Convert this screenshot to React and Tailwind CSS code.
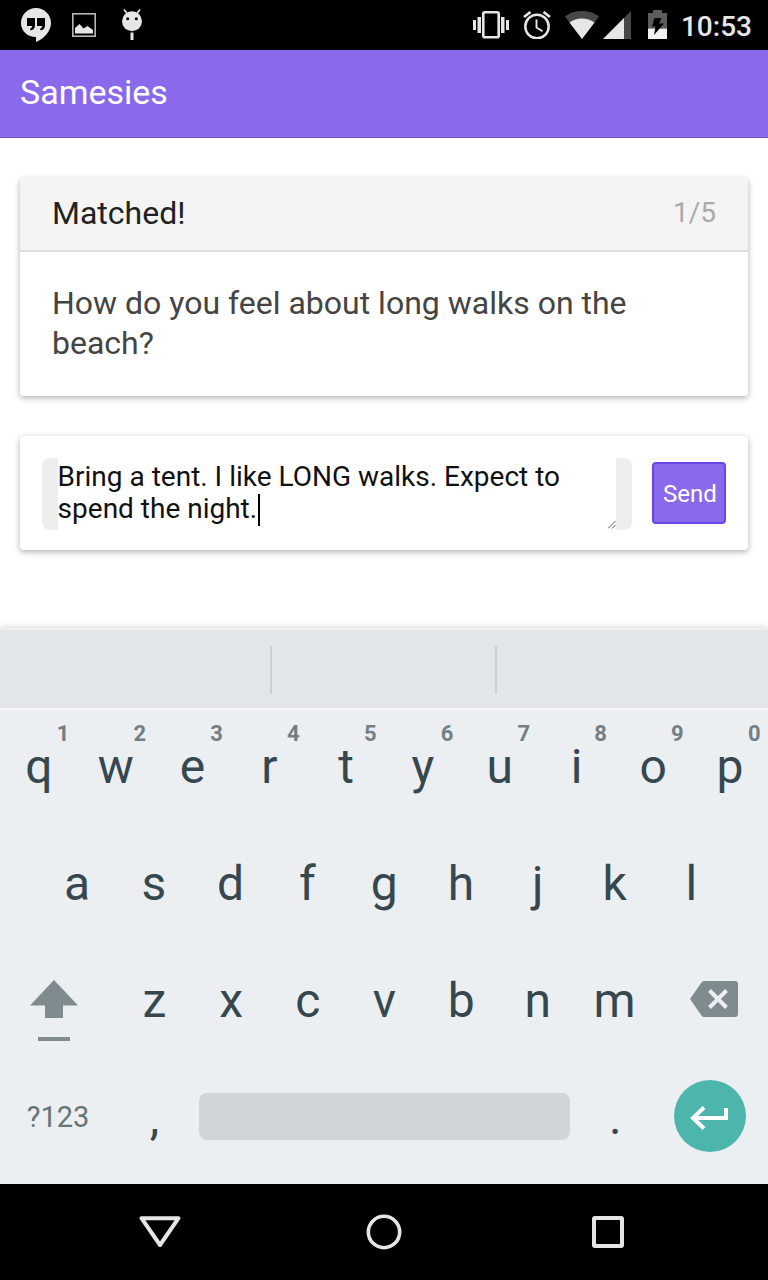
import React from "react";

const TOP_KEYS = [
  ["q", "1"], ["w", "2"], ["e", "3"], ["r", "4"], ["t", "5"],
  ["y", "6"], ["u", "7"], ["i", "8"], ["o", "9"], ["p", "0"],
];
const HOME_KEYS = ["a", "s", "d", "f", "g", "h", "j", "k", "l"];
const BOTTOM_KEYS = ["z", "x", "c", "v", "b", "n", "m"];

function HangoutsIcon() {
  return (
    <svg className="h-[34px] w-[30px]" viewBox="0 0 30 34">
      <path fill="#e6e6e6" d="M15 0C6.700 0 0 6.700 0 15c0 8 6.500 14 15 14v5c8.500-3.500 15-11 15-19C30 6.700 23.300 0 15 0Z" />
      <path fill="#000" d="M6 10h8v7.500c0 3-1.800 4.700-4.800 4.700v-1.700c1.300-.3 2-1.200 2-2.500H6ZM16 10h8v7.500c0 3-1.800 4.700-4.800 4.700v-1.700c1.300-.3 2-1.200 2-2.500H16Z" />
    </svg>
  );
}

function PictureIcon() {
  return (
    <svg className="h-6 w-6" viewBox="0 0 24 24">
      <rect x="0.800" y="0.800" width="22.400" height="22.400" fill="none" stroke="#b4b8b2" strokeWidth="1.600" />
      <path fill="#e6e6e6" d="M3 20.500v-5.500l4.500-4 4 4.500 4-2.500L21 17v3.500Z" />
    </svg>
  );
}

function DroidIcon() {
  return (
    <svg className="h-8 w-5" viewBox="0 0 20 32">
      <path stroke="#e6e6e6" strokeWidth="1.700" d="M2 .5 5 4.500M18 .5 15 4.500" />
      <circle cx="10" cy="12.300" r="10" fill="#e6e6e6" />
      <circle cx="5.700" cy="9.700" r="1.500" />
      <circle cx="14.300" cy="9.700" r="1.500" />
      <path fill="#e6e6e6" d="M8.500 23.500h3V31h-3z" />
    </svg>
  );
}

function VibrateIcon() {
  return (
    <svg className="h-7 w-9" viewBox="0 0 36 28">
      <rect x="10.300" y="1.300" width="15.400" height="25" rx="1.500" fill="none" stroke="#e6e6e6" strokeWidth="2.600" />
      <path fill="#e6e6e6" d="M0 9h3v10H0zM4.500 6H8v16H4.500zM28 6h3.500v16H28zM33 9h3v10h-3z" />
    </svg>
  );
}

function AlarmIcon() {
  return (
    <svg className="h-7 w-7" viewBox="0 0 28 28" fill="none" stroke="#e6e6e6">
      <circle cx="14" cy="15.500" r="11.700" strokeWidth="2.500" />
      <path strokeWidth="2.700" d="M1 6 7.500 1M27 6 20.500 1" />
      <path strokeWidth="1.900" d="M13.500 8.500v8l6 3.700" />
    </svg>
  );
}

function WifiIcon() {
  return (
    <svg className="h-7 w-[34px]" viewBox="0 0 34 28">
      <path fill="#484848" d="M17 28 0 5.500C10-1.800 24-1.800 34 5.500Z" />
      <path fill="#e6e6e6" d="M17 28 4.500 11.500c7.500-5.300 17.500-5.300 25 0Z" />
    </svg>
  );
}

function SignalIcon() {
  return (
    <svg className="h-7 w-7" viewBox="0 0 28 28">
      <path fill="#484848" d="M28 0v28H0Z" />
      <path fill="#e6e6e6" d="M21 7v21H0Z" />
    </svg>
  );
}

function BatteryIcon() {
  return (
    <svg className="h-[29px] w-[19px]" viewBox="0 0 19 29">
      <path fill="#5c5c5c" d="M0 3h5V0h9v3h5v15.500H0Z" />
      <path fill="#f2f2f2" d="M0 18.500h19V29H0Z" />
      <path fill="#000" d="M6.500 8h7l-2.500 5.500H16L6 25l1.500-8.500H4Z" />
    </svg>
  );
}

function StatusBar() {
  return (
    <div className="flex h-[50px] items-center bg-black">
      <div className="ml-[21px] flex items-center">
        <HangoutsIcon />
        <div className="ml-[21px]">
          <PictureIcon />
        </div>
        <div className="ml-[26px]">
          <DroidIcon />
        </div>
      </div>
      <div className="ml-auto flex items-center pr-4">
        <VibrateIcon />
        <div className="ml-[14px]"><AlarmIcon /></div>
        <div className="ml-[14px]"><WifiIcon /></div>
        <div className="ml-1"><SignalIcon /></div>
        <div className="-mt-0.5 ml-[17px]"><BatteryIcon /></div>
        <span className="ml-[14px] pt-[3px] text-[28px] font-medium leading-8 text-[#e6e6e6]">10:53</span>
      </div>
    </div>
  );
}

function QuestionCard() {
  return (
    <section className="h-[218px] overflow-hidden rounded-[4px] bg-white shadow-[0_2px_6px_rgba(0,0,0,0.3)]">
      <div className="flex h-[74px] items-center justify-between border-b-2 border-[#dddddd] bg-[#f4f4f4] px-8 pb-0.5">
        <h2 className="text-[32px] leading-10 text-[#222]">Matched!</h2>
        <span className="text-[28px] leading-10 text-[#aaa]">1/5</span>
      </div>
      <p className="px-8 pt-[31px] text-[32px] leading-10 text-[#444]">
        How do you feel about long walks on the
        <br />
        beach?
      </p>
    </section>
  );
}

function AnswerCard() {
  return (
    <section className="mt-10 flex h-[114px] items-start rounded-[4px] bg-white px-[22px] pt-[22px] shadow-[0_2px_6px_rgba(0,0,0,0.3)]">
      <div className="flex h-[72px] w-[590px] overflow-hidden rounded-lg bg-[#eee] px-4">
        <div className="flex flex-1 items-end justify-between bg-white">
          <p className="-ml-[0.4px] h-full whitespace-nowrap pt-[3px] text-[28px] leading-8 text-[#111]">
            Bring a tent. I like LONG walks. Expect to
            <br />
            <span className="flex">
              spend the night.
              <span className="ml-px mt-px h-8 w-0.5 bg-black" />
            </span>
          </p>
          <svg className="mb-px h-2 w-2 shrink-0" viewBox="0 0 8 8" stroke="#555" strokeWidth="1">
            <path d="M0 7.500 7.500 0M4 7.500 7.500 4" />
          </svg>
        </div>
      </div>
      <button className="ml-5 mt-1 flex h-[62px] w-[74px] items-center justify-center rounded-[4px] border-2 border-[#6b46e5] bg-[#8a6aeb] pl-0.5 pt-0.5 text-[24px] leading-8 text-white">
        Send
      </button>
    </section>
  );
}

function Letter({ children }) {
  return <span className="text-[48px] leading-[46px] text-[#37474f]">{children}</span>;
}

function Keyboard() {
  return (
    <div className="bg-[#ebeff2]">
      <div className="flex h-[82px] border-y-2 border-t-[#eff0f1] border-b-[#f5f7f8] bg-[#e2e6e9] pb-[14px] pt-4 shadow-[0_-1px_6px_rgba(0,0,0,0.15)]">
        <div className="w-[272px] border-r-2 border-[#cacfd2]" />
        <div className="w-[225px] border-r-2 border-[#cacfd2]" />
      </div>
      <div className="relative h-[474px] bg-[#ebeff2]">
        <div className="grid h-[117px] grid-cols-10 pt-3">
          {TOP_KEYS.map(([letter, hint]) => (
            <div key={letter} className="flex flex-col items-center pl-px">
              <span className="mr-[7.5px] self-end text-[22px] font-bold leading-6 text-[#737f84]">{hint}</span>
              <span className="-mt-0.5 text-[48px] leading-[46px] text-[#37474f]">{letter}</span>
            </div>
          ))}
        </div>
        <div className="grid h-[117px] grid-cols-9 pl-[38.6px] pr-[38.2px] pt-[34px]">
          {HOME_KEYS.map((letter) => (
            <div key={letter} className="flex justify-center">
              <Letter>{letter}</Letter>
            </div>
          ))}
        </div>
        <div className="flex h-[117px]">
          <div className="flex w-[115.2px] justify-center pr-[7px] pt-[36px]">
            <svg className="h-[61px] w-12" viewBox="0 0 48 61" fill="#808b8f">
              <path d="M24 0 48 25.500H33V38H15V25.500H0ZM8 57h32v4H8z" />
            </svg>
          </div>
          <div className="grid w-[537.6px] grid-cols-7 pl-px pt-[34px]">
            {BOTTOM_KEYS.map((letter) => (
              <div key={letter} className="flex justify-center">
                <Letter>{letter}</Letter>
              </div>
            ))}
          </div>
          <div className="flex flex-1 justify-end pr-[30px] pt-[37px]">
            <svg className="h-9 w-12" viewBox="0 0 48 36">
              <path fill="#808b8f" d="M14 0H45a3 3 0 0 1 3 3V33a3 3 0 0 1-3 3H14q-1.500 0-2.500-1.500L0 18 11.500 1.500Q12.500 0 14 0Z" />
              <path stroke="#ebeff2" strokeWidth="4" d="m19.500 9.500 17 17M36.500 9.500l-17 17" />
            </svg>
          </div>
        </div>
        <div className="flex h-[123px]">
          <div className="flex w-[115.2px] justify-center pl-px pt-[33px]">
            <span className="text-[29px] leading-[46px] text-[#667479]">?123</span>
          </div>
          <div className="flex w-[76.8px] justify-center pl-0.5 pt-[34px]">
            <Letter>,</Letter>
          </div>
          <div className="w-[384px] pl-[7px] pr-[6px] pt-8">
            <div className="h-[47px] rounded-lg bg-[#d0d5d8]" />
          </div>
          <div className="flex w-[76.8px] justify-center pl-0.5 pt-[34px]">
            <Letter>.</Letter>
          </div>
          <div className="flex flex-1 justify-end pr-[22px] pt-[19px]">
            <div className="flex h-[72px] w-[72px] items-center justify-center rounded-full bg-[#4db6ac] pr-0.5 pt-1">
              <svg className="h-6 w-[38px]" viewBox="0 0 38 24" fill="none" stroke="#fff" strokeWidth="4">
                <path d="M36 2v10H3M14 1.500 3 12l11 10.500" />
              </svg>
            </div>
          </div>
        </div>
      </div>
    </div>
  );
}

function NavigationBar() {
  return (
    <div className="flex h-24 items-center justify-between bg-black px-[139px]">
      <svg className="h-8 w-[42px]" viewBox="0 0 42 32">
        <path d="M2.500 2.200h37L21 29Z" fill="none" stroke="#e6e6e6" strokeWidth="4" strokeLinejoin="round" />
      </svg>
      <svg className="h-9 w-9" viewBox="0 0 36 36">
        <circle cx="18" cy="18" r="15.700" fill="none" stroke="#e6e6e6" strokeWidth="3.600" />
      </svg>
      <div className="flex w-[42px] justify-center">
        <div className="h-8 w-8 rounded-[3px] border-4 border-[#e6e6e6]" />
      </div>
    </div>
  );
}

export default function App() {
  return (
    <div className="flex h-[1280px] w-[768px] flex-col overflow-hidden bg-white font-['Roboto',sans-serif]">
      <StatusBar />
      <header className="flex h-[88px] items-center border-b border-[#6b50c8] bg-[#8a6aeb] px-5 pb-1">
        <h1 className="text-[34px] leading-10 text-white">Samesies</h1>
      </header>
      <main className="flex-1 px-5 pt-10">
        <QuestionCard />
        <AnswerCard />
      </main>
      <Keyboard />
      <NavigationBar />
    </div>
  );
}
